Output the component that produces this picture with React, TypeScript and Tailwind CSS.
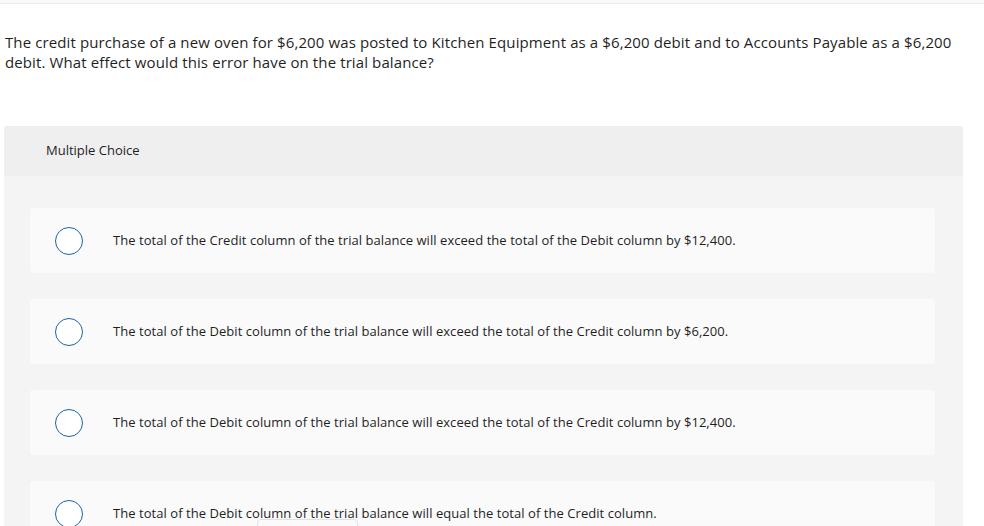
import React from "react";

const options = [
  "The total of the Credit column of the trial balance will exceed the total of the Debit column by $12,400.",
  "The total of the Debit column of the trial balance will exceed the total of the Credit column by $6,200.",
  "The total of the Debit column of the trial balance will exceed the total of the Credit column by $12,400.",
  "The total of the Debit column of the trial balance will equal the total of the Credit column.",
];

export default function App() {
  return (
    <div
      className="relative h-[526px] w-[984px] overflow-hidden bg-white text-[#1f1f1f]"
      style={{ fontFamily: '"Open Sans", "Liberation Sans", sans-serif' }}
    >
      <div className="h-[4px] border-b border-[#ececec] bg-[#f9f9f9]" />

      <p className="mt-[28px] pl-[5px] pr-[20px] text-[15px] leading-[20px] tracking-[0.11px]">
        The credit purchase of a new oven for $6,200 was posted to Kitchen Equipment as a $6,200 debit and to
        Accounts Payable as a $6,200 debit. What effect would this error have on the trial balance?
      </p>

      <div className="ml-[4px] mt-[54px] w-[959px] overflow-hidden rounded-t-[3px] bg-[#f4f4f4]">
        <div className="flex h-[50px] items-center bg-[#efefef] pl-[42px] text-[13px]">Multiple Choice</div>
        <div className="flex flex-col gap-[26px] pl-[26px] pr-[28px] pt-[32px]">
          {options.map((text) => (
            <label
              key={text}
              className="flex h-[65px] cursor-pointer items-center rounded-[3px] bg-[#fafafa] pl-[25px] text-[13px] tracking-[0.05px]"
            >
              <span className="h-[28px] w-[28px] shrink-0 rounded-full border-[1.5px] border-[#1d62a6] bg-white" />
              <span className="ml-[30px]">{text}</span>
            </label>
          ))}
        </div>
      </div>

      <div className="absolute left-[257px] top-[519px] h-[20px] w-[101px] rounded-t-[4px] border border-[#e2e2e2] bg-[#fafafa]" />
    </div>
  );
}
